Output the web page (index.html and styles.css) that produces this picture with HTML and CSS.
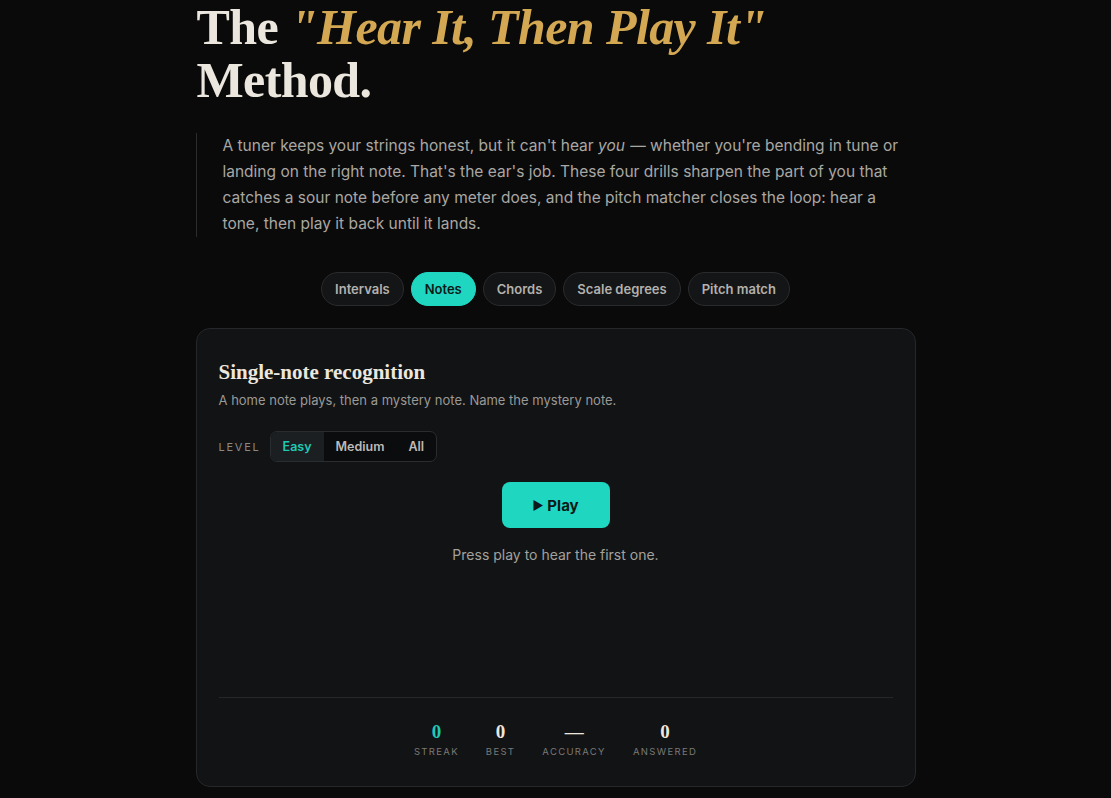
FILE: index.html
```html
<!DOCTYPE html>
<html lang="en">
<head>
    <meta charset="UTF-8">
    <meta name="viewport" content="width=device-width, initial-scale=1.0">
    <title>Ear Training - Hear It, Then Play It</title>
    <link rel="stylesheet" href="styles.css">
</head>
<body>
    <main class="page">
        <h1 class="headline">The <em>"Hear It, Then Play It"</em> Method.</h1>
        <blockquote class="lead">
            A tuner keeps your strings honest, but it can't hear <em>you</em> &mdash; whether you're bending in tune or landing on the right note. That's the ear's job. These four drills sharpen the part of you that catches a sour note before any meter does, and the pitch matcher closes the loop: hear a tone, then play it back until it lands.
        </blockquote>

        <nav class="tabs">
            <button class="tab">Intervals</button>
            <button class="tab active">Notes</button>
            <button class="tab">Chords</button>
            <button class="tab">Scale degrees</button>
            <button class="tab">Pitch match</button>
        </nav>

        <section class="drill">
            <h2>Single-note recognition</h2>
            <p class="drill-desc">A home note plays, then a mystery note. Name the mystery note.</p>

            <div class="level-row">
                <span class="level-label">Level</span>
                <div class="segmented">
                    <button class="seg active">Easy</button>
                    <button class="seg">Medium</button>
                    <button class="seg">All</button>
                </div>
            </div>

            <div class="stage">
                <button class="play-btn"><span class="play-icon">&#9654;</span> Play</button>
                <p class="prompt">Press play to hear the first one.</p>
            </div>

            <div class="stats">
                <div class="stat">
                    <span class="stat-value teal">0</span>
                    <span class="stat-label">Streak</span>
                </div>
                <div class="stat">
                    <span class="stat-value">0</span>
                    <span class="stat-label">Best</span>
                </div>
                <div class="stat">
                    <span class="stat-value">&mdash;</span>
                    <span class="stat-label">Accuracy</span>
                </div>
                <div class="stat">
                    <span class="stat-value">0</span>
                    <span class="stat-label">Answered</span>
                </div>
            </div>
        </section>
    </main>
</body>
</html>
```

FILE: styles.css
```css
body {
    margin: 0;
    padding: 0;
    background-color: #0a0a0a;
    color: #e9e4da;
    font-family: 'Inter', 'DejaVu Sans', sans-serif;
}
.page {
    width: 720px;
    margin: 0 auto;
    padding-top: 1px;
}
.headline {
    font-family: 'Liberation Serif', 'DejaVu Serif', serif;
    font-weight: 700;
    font-size: 50px;
    line-height: 53px;
    margin: 0 0 26px 1px;
    color: #ece7de;
    letter-spacing: -0.6px;
}
.headline em {
    color: #d4a853;
    font-style: italic;
}
.lead {
    margin: 0;
    border-left: 1px solid #2c2c2c;
    padding: 0 0 0 26px;
    font-size: 15.5px;
    line-height: 26px;
    color: #a9a7a3;
    height: 104px;
}
.lead em {
    font-style: italic;
    padding-right: 1px;
}
.tabs {
    display: flex;
    justify-content: center;
    gap: 7px;
    margin: 35px 0 22px;
}
.tab {
    font-family: inherit;
    font-size: 13px;
    font-weight: 600;
    color: #b3b1ad;
    background: #141516;
    border: 1px solid #2a2b2d;
    border-radius: 17px;
    height: 34px;
    padding: 0 13px;
    cursor: pointer;
}
.tab.active {
    background: #1fd6c1;
    border-color: #1fd6c1;
    color: #0b1a18;
}
.drill {
    background: #111315;
    border: 1px solid #25282b;
    border-radius: 14px;
    padding: 30px 22px 29px;
}
.drill h2 {
    font-family: 'Liberation Serif', 'DejaVu Serif', serif;
    font-weight: 700;
    font-size: 21px;
    margin: 0;
    line-height: 26px;
    color: #ece7de;
}
.drill-desc {
    font-size: 13px;
    color: #9b9995;
    margin: 7px 0 0;
}
.level-row {
    display: flex;
    align-items: center;
    gap: 9px;
    margin-top: 23px;
}
.level-label {
    font-size: 11px;
    letter-spacing: 0.16em;
    text-transform: uppercase;
    color: #8a8986;
}
.segmented {
    display: flex;
    background: #0b0c0d;
    border: 1px solid #2a2d30;
    border-radius: 7px;
    overflow: hidden;
    height: 29px;
}
.seg {
    font-family: inherit;
    font-size: 12.5px;
    font-weight: 600;
    color: #bdbbb7;
    background: transparent;
    border: none;
    padding: 0 12px;
    cursor: pointer;
}
.seg.active {
    background: #1b1f21;
    color: #1fc9b6;
}
.stage {
    display: flex;
    flex-direction: column;
    align-items: center;
    height: 236px;
    padding-top: 20px;
    box-sizing: border-box;
    border-bottom: 1px solid #25282b;
}
.play-btn {
    font-family: inherit;
    font-size: 15px;
    font-weight: 700;
    color: #0b1a18;
    background: #1fd6c1;
    border: none;
    border-radius: 8px;
    width: 108px;
    height: 46px;
    cursor: pointer;
}
.play-icon {
    font-size: 12px;
    position: relative;
    top: -1px;
}
.prompt {
    font-size: 14px;
    color: #a3a19d;
    margin: 18px 0 0;
}
.stats {
    display: flex;
    justify-content: center;
    gap: 27px;
    padding-top: 24px;
}
.stat {
    display: flex;
    flex-direction: column;
    align-items: center;
}
.stat-value {
    font-family: 'Liberation Serif', 'DejaVu Serif', serif;
    font-weight: 700;
    font-size: 19px;
    line-height: 20px;
    color: #ece7de;
}
.stat-value.teal {
    color: #1fc9b6;
}
.stat-label {
    font-size: 9.5px;
    letter-spacing: 0.14em;
    text-transform: uppercase;
    color: #7a7976;
    margin-top: 4px;
}
```
